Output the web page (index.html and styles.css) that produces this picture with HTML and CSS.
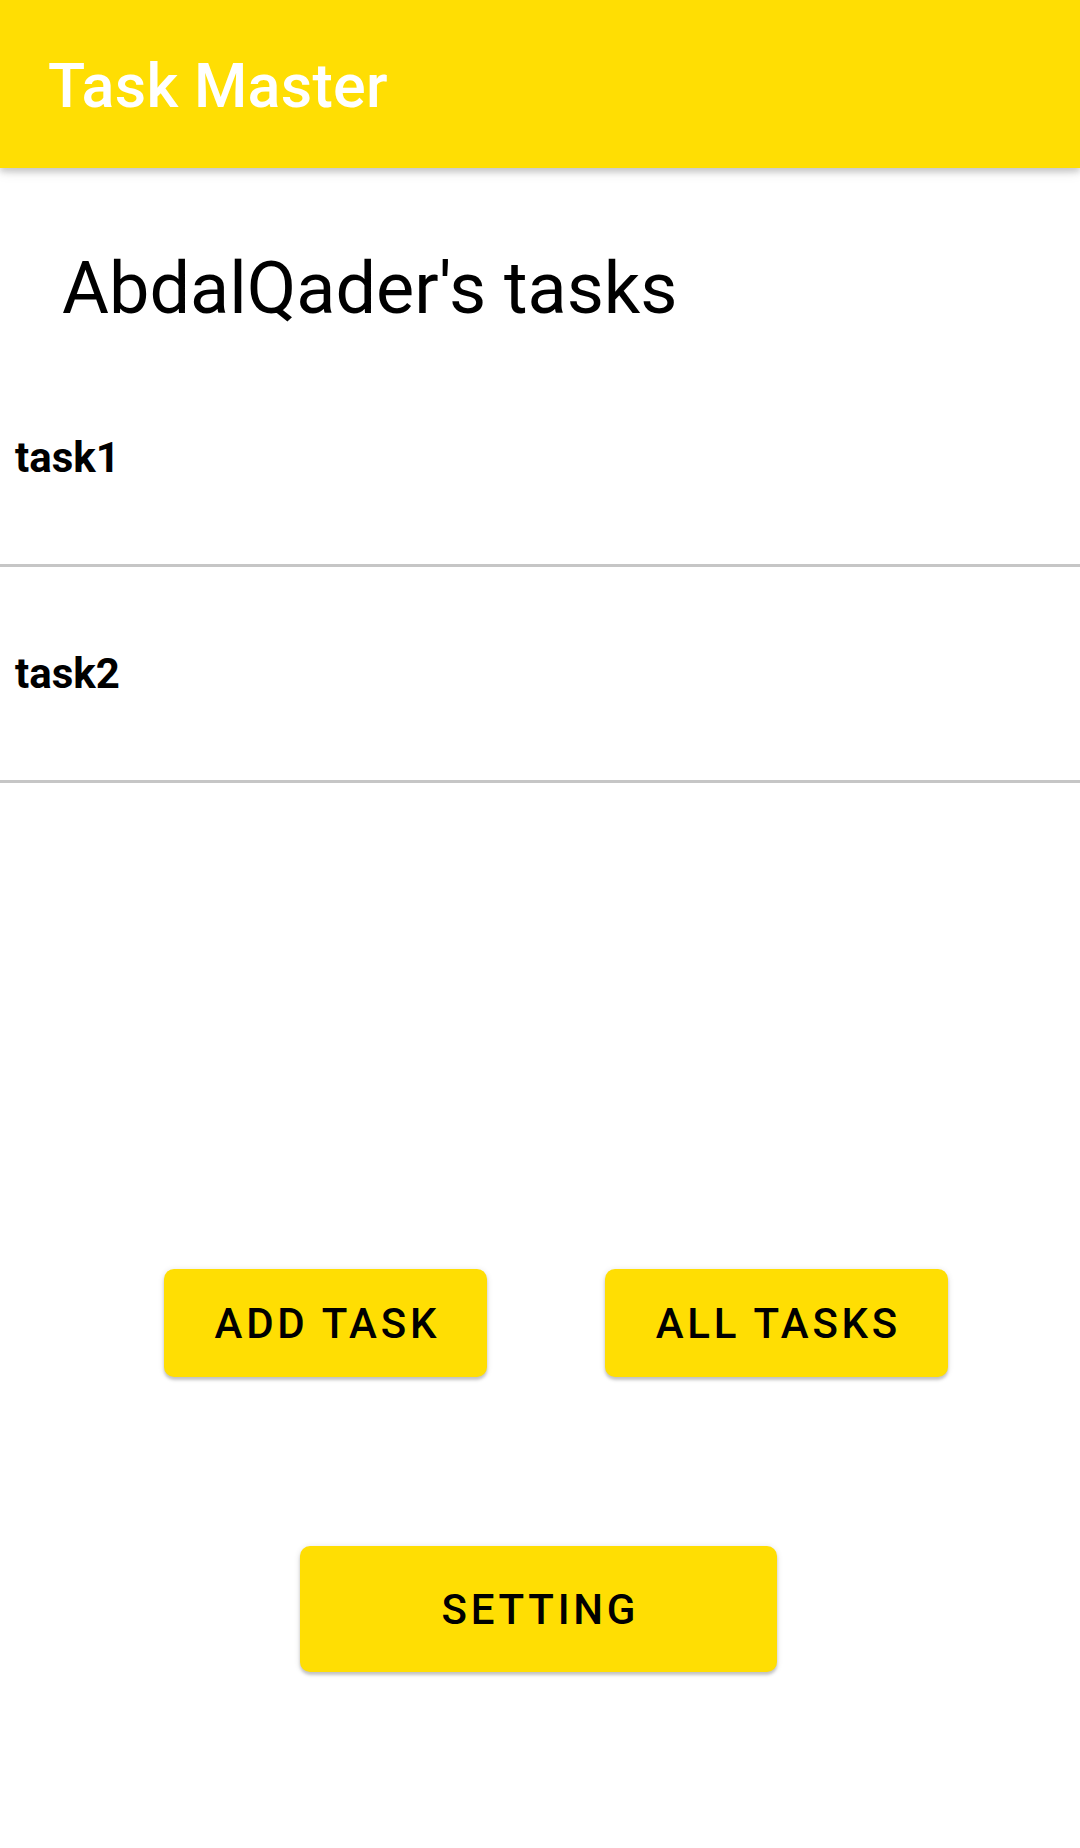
FILE: index.html
```html
<!DOCTYPE html>
<html lang="en">
<head>
<meta charset="utf-8">
<title>Task Master</title>
<link rel="stylesheet" href="styles.css">
</head>
<body>
<header class="app-bar">
  <h1 class="app-title">Task Master</h1>
</header>
<main class="content">
  <h2 class="heading">AbdalQader's tasks</h2>
  <ul class="task-list">
    <li class="task-item">task1</li>
    <li class="task-item">task2</li>
  </ul>
  <div class="button-row">
    <button class="btn btn-add">ADD TASK</button>
    <button class="btn btn-all">ALL TASKS</button>
  </div>
  <div class="setting-row">
    <button class="btn btn-setting">SETTING</button>
  </div>
</main>
</body>
</html>
```

FILE: styles.css
```css
html, body {
  margin: 0;
  padding: 0;
  background: #ffffff;
}

body {
  width: 1080px;
  min-height: 1848px;
  font-family: Roboto, "Noto Sans", "Liberation Sans", sans-serif;
  color: #000000;
}

.app-bar {
  height: 168px;
  box-sizing: border-box;
  background: #FFDE03;
  display: flex;
  align-items: center;
  padding: 4px 0 0 48px;
  box-shadow: 0 4px 6px rgba(0, 0, 0, 0.16), 0 2px 14px rgba(0, 0, 0, 0.12);
  position: relative;
  z-index: 1;
}

.app-title {
  margin: 0;
  font-size: 61px;
  font-weight: 500;
  line-height: 70px;
  color: #ffffff;
  letter-spacing: 0.3px;
}

.content {
  display: flex;
  flex-direction: column;
}

.heading {
  margin: 79px 0 0 62px;
  font-size: 72px;
  font-weight: 400;
  line-height: 84px;
  height: 84px;
}

.task-list {
  list-style: none;
  margin: 20px 0 0 0;
  padding: 0;
}

.task-item {
  height: 213px;
  display: flex;
  align-items: center;
  padding-left: 15px;
  font-size: 42px;
  font-weight: 700;
  line-height: 50px;
  border-bottom: 3px solid #c6c6c6;
}

.button-row {
  display: flex;
  gap: 118px;
  margin-top: 486px;
  padding-left: 164px;
}

.btn {
  border: none;
  background: #FFDE03;
  color: #000000;
  font-family: Roboto, "Noto Sans", "Liberation Sans", sans-serif;
  font-size: 42px;
  font-weight: 500;
  letter-spacing: 3.75px;
  border-radius: 10px;
  box-shadow: 0 3px 3px rgba(0, 0, 0, 0.18), 0 1px 6px rgba(0, 0, 0, 0.12);
  display: flex;
  align-items: center;
  justify-content: center;
  padding: 0 0 0 3.75px;
  cursor: pointer;
}

.btn-add {
  width: 323px;
  height: 108px;
}

.btn-all {
  width: 343px;
  height: 108px;
}

.setting-row {
  display: flex;
  justify-content: center;
  margin-top: 169px;
  padding-right: 3px;
}

.btn-setting {
  width: 477px;
  height: 126px;
}
```
